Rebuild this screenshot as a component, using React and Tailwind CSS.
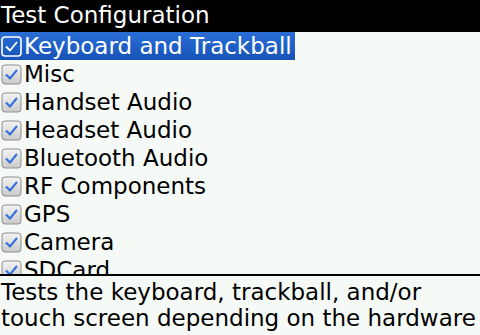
const ITEMS = [
  'Keyboard and Trackball',
  'Misc',
  'Handset Audio',
  'Headset Audio',
  'Bluetooth Audio',
  'RF Components',
  'GPS',
  'Camera',
  'SDCard',
];

function CheckBox({ selected }) {
  if (selected) {
    return (
      <svg width="21" height="21" viewBox="0 0 21 21" className="shrink-0">
        <rect x="1" y="1" width="19" height="19" rx="3" fill="none" stroke="#ffffff" strokeWidth="1.6" />
        <path d="M5 10.5 L9 14.5 L16 6" fill="none" stroke="#ffffff" strokeWidth="1.8" />
      </svg>
    );
  }
  return (
    <svg width="21" height="21" viewBox="0 0 21 21" className="shrink-0">
      <defs>
        <linearGradient id="cbg" x1="0" y1="0" x2="0" y2="1">
          <stop offset="0" stopColor="#f4f4f4" />
          <stop offset="1" stopColor="#c9c9c9" />
        </linearGradient>
      </defs>
      <rect x="1" y="1" width="19" height="19" rx="3" fill="url(#cbg)" stroke="#8f8f8f" strokeWidth="1" />
      <path d="M5 10.5 L9 14.5 L16 6" fill="none" stroke="#2f6fe0" strokeWidth="2" />
    </svg>
  );
}

export default function App() {
  return (
    <div className="w-[480px] h-[335px] bg-[#f6faf6] flex flex-col overflow-hidden text-black" style={{ fontFamily: '"DejaVu Sans", sans-serif' }}>
      {/* Title bar */}
      <div className="h-[32px] bg-black text-white text-[23px] leading-[31px] pl-[1px] shrink-0">
        Test Configuration
      </div>

      {/* Checklist */}
      <div className="h-[242px] overflow-hidden flex flex-col shrink-0">
        {ITEMS.map((label, i) => (
          <div key={label} className="h-[28px] flex shrink-0">
            <div
              className={`flex items-center gap-[2px] pl-[1px] pr-[3px] ${
                i === 0 ? 'bg-gradient-to-b from-[#2a6fd6] to-[#1752b8] text-white' : ''
              }`}
            >
              <CheckBox selected={i === 0} />
              <span className="text-[23px] leading-[28px] whitespace-nowrap">{label}</span>
            </div>
          </div>
        ))}
      </div>

      <div className="h-[2px] bg-black shrink-0" />

      {/* Description */}
      <div className="text-[23px] leading-[26px] pl-[1px] pt-[3px]">
        Tests the keyboard, trackball, and/or
        <br />
        touch screen depending on the hardware
      </div>
    </div>
  );
}
